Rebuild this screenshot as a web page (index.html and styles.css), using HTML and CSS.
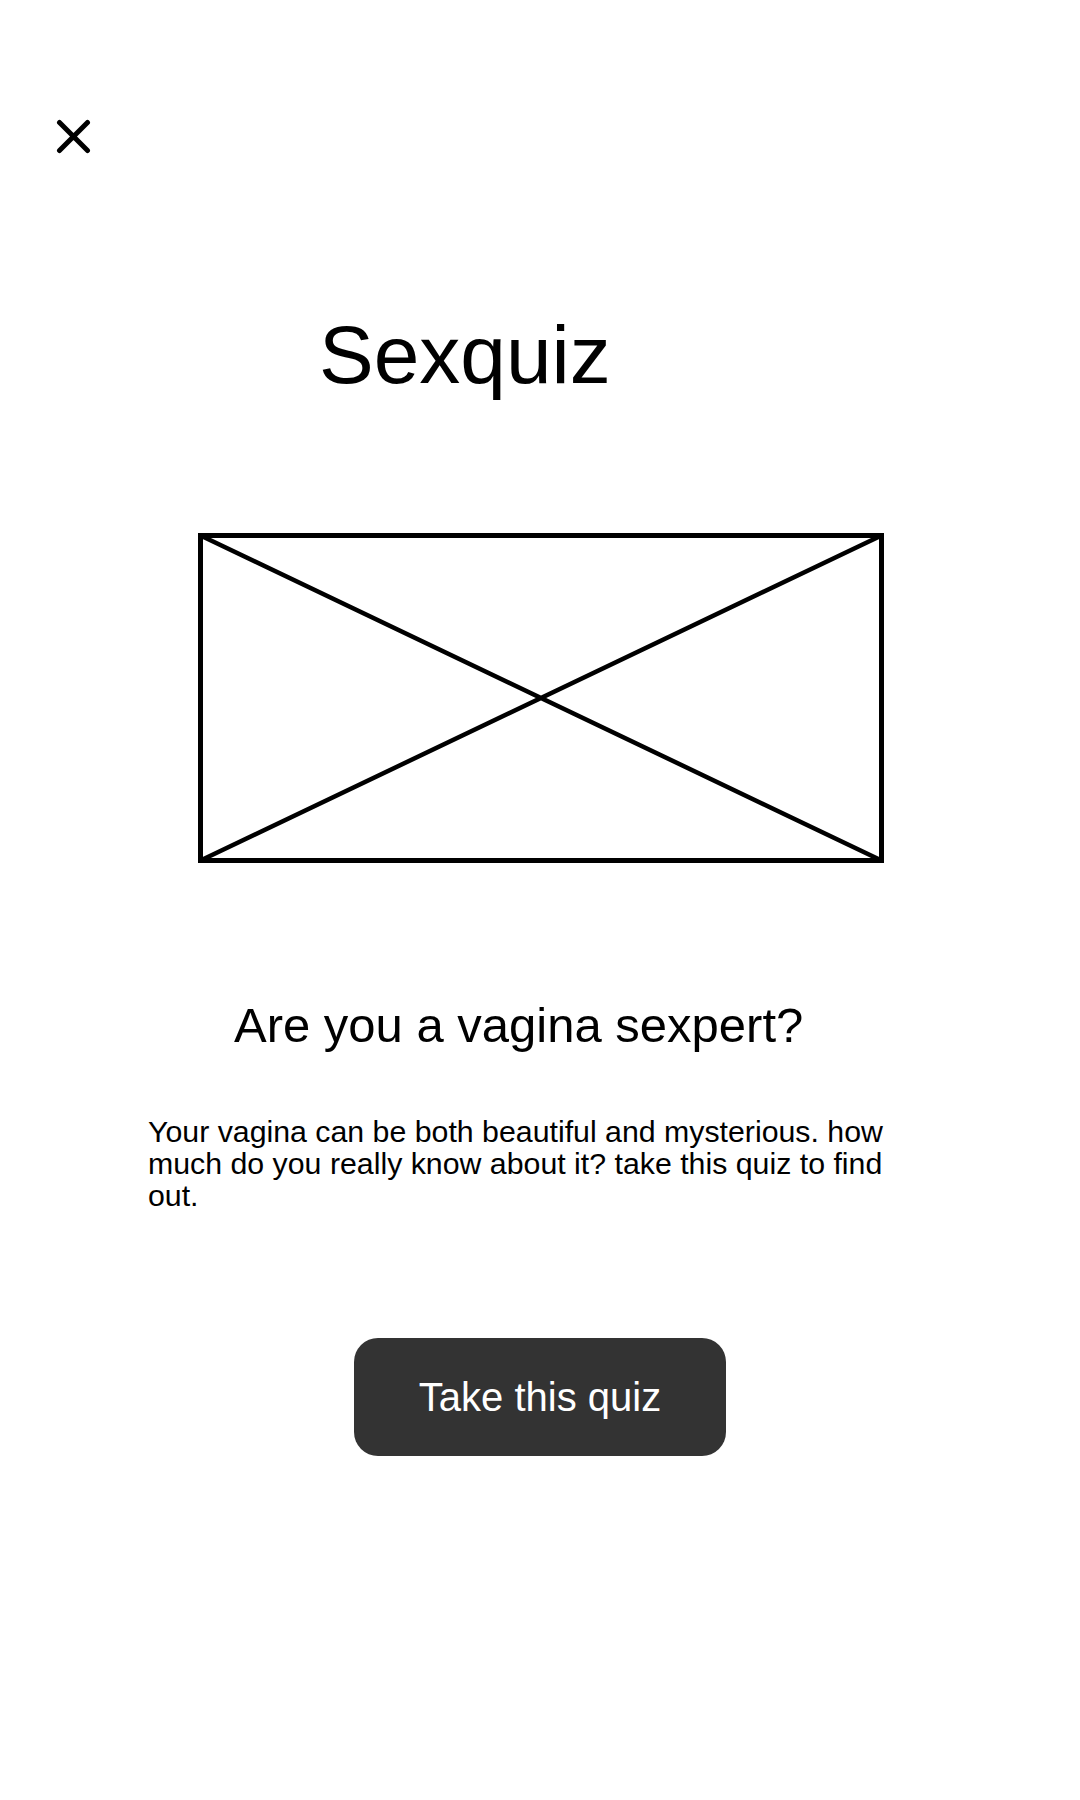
FILE: index.html
```html
<!DOCTYPE html>
<html lang="en">
<head>
<meta charset="utf-8">
<title>Sexquiz</title>
<link rel="stylesheet" href="styles.css">
</head>
<body>
<main class="page">
  <header class="topbar">
    <button class="close" aria-label="Close">
      <svg width="35" height="35" viewBox="0 0 35 35">
        <path d="M3.5 3.5 L31.5 31.5 M31.5 3.5 L3.5 31.5" stroke="#000" stroke-width="5" stroke-linecap="round" fill="none"/>
      </svg>
    </button>
  </header>
  <h1 class="title">Sexquiz</h1>
  <div class="placeholder">
    <svg width="686" height="330" viewBox="0 0 686 330">
      <rect x="2.5" y="2.5" width="681" height="325" fill="none" stroke="#000" stroke-width="5"/>
      <path d="M2.5 2.5 L683.5 327.5 M2.5 327.5 L683.5 2.5" stroke="#000" stroke-width="4.5" fill="none"/>
    </svg>
  </div>
  <h2 class="question">Are you a vagina sexpert?</h2>
  <p class="desc">Your vagina can be both beautiful and mysterious. how much do you really know about it? take this quiz to find out.</p>
  <div class="actions">
    <button class="cta">Take this quiz</button>
  </div>
</main>
</body>
</html>
```

FILE: styles.css
```css
html, body {
  margin: 0;
  padding: 0;
  background: #ffffff;
}

body {
  font-family: "Liberation Sans", Arial, sans-serif;
  color: #000;
  width: 1080px;
  min-height: 1800px;
}

.page {
  display: flex;
  flex-direction: column;
  padding-top: 119px;
}

.topbar {
  display: flex;
  padding-left: 56px;
}

.close {
  display: block;
  width: 35px;
  height: 35px;
  padding: 0;
  margin: 0;
  border: 0;
  background: none;
}

.close svg {
  display: block;
}

.title {
  margin: 160px 0 0 0;
  padding-left: 319px;
  font-size: 82px;
  line-height: 82px;
  font-weight: normal;
}

.placeholder {
  margin-top: 137px;
  display: flex;
  justify-content: center;
  padding-left: 2px;
}

.placeholder svg {
  display: block;
}

.question {
  margin: 138px 0 0 0;
  padding-left: 234px;
  font-size: 49px;
  line-height: 49px;
  font-weight: normal;
}

.desc {
  margin: 66px 0 0 148px;
  width: 745px;
  font-size: 30.3px;
  line-height: 32px;
}

.actions {
  margin-top: 126px;
  display: flex;
  justify-content: center;
}

.cta {
  width: 372px;
  height: 118px;
  border: 0;
  border-radius: 24px;
  background: #333333;
  color: #ffffff;
  font-family: "Liberation Sans", Arial, sans-serif;
  font-size: 40px;
  line-height: 40px;
  padding: 0;
  display: flex;
  align-items: center;
  justify-content: center;
}
```
